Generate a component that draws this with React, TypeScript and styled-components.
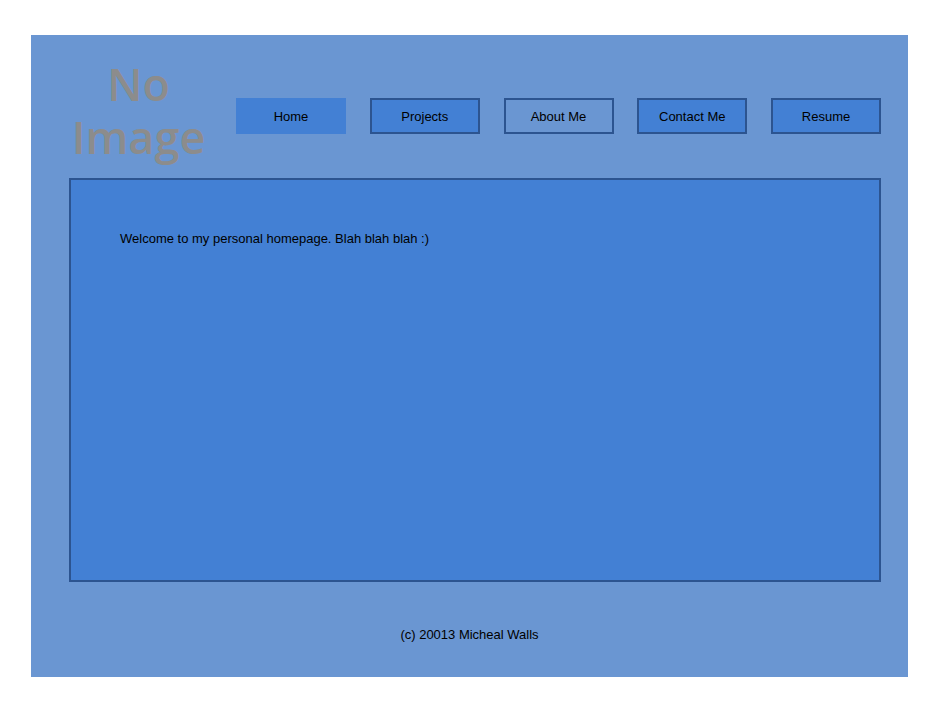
import React from "react";
import styled, { createGlobalStyle } from "styled-components";

const GlobalStyle = createGlobalStyle`
  body {
    margin: 0;
    background-color: #ffffff;
    font-family: "Liberation Sans", Arial, sans-serif;
  }
`;

const Page = styled.div`
  width: 877px;
  margin: 35px 0 0 31px;
  background-color: #6a96d2;
`;

const Header = styled.div`
  display: flex;
  align-items: flex-start;
  height: 143px;
  padding: 0 27px 0 38px;
`;

const Logo = styled.div`
  flex: 0 0 139px;
  display: flex;
  flex-direction: column;
  align-items: center;
  padding-top: 22px;
  font-family: "Open Sans", Lato, sans-serif;
  font-weight: 600;
  font-size: 45px;
  color: #8c8c8c;
`;

const LogoLine = styled.span`
  display: block;
  height: 53px;
  line-height: 53px;
  white-space: nowrap;
`;

const Nav = styled.div`
  flex: 1;
  display: flex;
  justify-content: space-between;
  margin: 63px 0 0 28px;
`;

const NavButton = styled.div<{ $variant?: "active" | "plain" | "light" }>`
  box-sizing: border-box;
  width: 110px;
  height: 36px;
  display: flex;
  align-items: center;
  justify-content: center;
  border: 2px solid
    ${(p) => (p.$variant === "active" ? "transparent" : "#2c5490")};
  background-color: ${(p) =>
    p.$variant === "light" ? "transparent" : "#4380d4"};
  font-size: 13px;
  color: #000000;
`;

const Content = styled.div`
  box-sizing: border-box;
  height: 404px;
  margin: 0 27px 0 38px;
  padding: 51px 0 0 49px;
  border: 2px solid #2c5490;
  background-color: #4380d4;
  font-size: 13px;
  line-height: 15px;
  color: #000000;
`;

const Footer = styled.div`
  box-sizing: border-box;
  height: 95px;
  padding-top: 45px;
  text-align: center;
  font-size: 13px;
  line-height: 15px;
  color: #000000;
`;

const App = () => {
  return (
    <>
      <GlobalStyle />
      <Page>
        <Header>
          <Logo>
            <LogoLine>No</LogoLine>
            <LogoLine>Image</LogoLine>
          </Logo>
          <Nav>
            <NavButton $variant="active">Home</NavButton>
            <NavButton>Projects</NavButton>
            <NavButton $variant="light">About Me</NavButton>
            <NavButton>Contact Me</NavButton>
            <NavButton>Resume</NavButton>
          </Nav>
        </Header>
        <Content>Welcome to my personal homepage. Blah blah blah :)</Content>
        <Footer>(c) 20013 Micheal Walls</Footer>
      </Page>
    </>
  );
};

export default App;
